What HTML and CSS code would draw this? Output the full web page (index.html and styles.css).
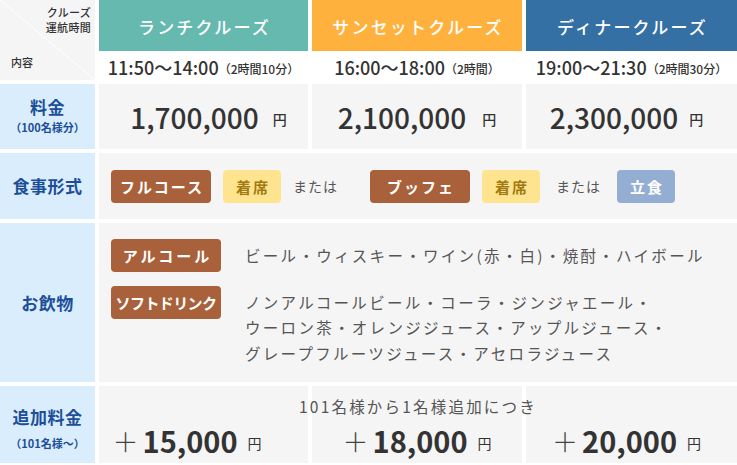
FILE: index.html
```html
<!DOCTYPE html>
<html lang="ja">
<head>
<meta charset="utf-8">
<title>クルーズ料金表</title>
<link rel="stylesheet" href="styles.css">
</head>
<body>
<div class="table">
  <div class="corner">
    <div class="corner-top">クルーズ<br>運航時間</div>
    <div class="corner-bottom">内容</div>
  </div>
  <div class="head">
    <div class="head-title teal">ランチクルーズ</div>
    <div class="head-time">11:50〜14:00<small>（2時間10分）</small></div>
  </div>
  <div class="head">
    <div class="head-title orange">サンセットクルーズ</div>
    <div class="head-time">16:00〜18:00<small>（2時間）</small></div>
  </div>
  <div class="head">
    <div class="head-title blue">ディナークルーズ</div>
    <div class="head-time">19:00〜21:30<small>（2時間30分）</small></div>
  </div>

  <div class="label">
    <span class="label-main">料金</span>
    <span class="label-sub">（100名様分）</span>
  </div>
  <div class="cell price price-first">1,700,000<span class="yen">円</span></div>
  <div class="cell price">2,100,000<span class="yen yen-wide">円</span></div>
  <div class="cell price price-last">2,300,000<span class="yen yen-tight">円</span></div>

  <div class="label"><span class="label-main">食事形式</span></div>
  <div class="cell wide meals">
    <div class="group">
      <span class="tag tag-brown">フルコース</span>
      <span class="tag tag-yellow">着席</span>
      <span class="or">または</span>
    </div>
    <div class="group group-loose">
      <span class="tag tag-brown">ブッフェ</span>
      <span class="tag tag-yellow">着席</span>
      <span class="or">または</span>
      <span class="tag tag-blue">立食</span>
    </div>
  </div>

  <div class="label"><span class="label-main">お飲物</span></div>
  <div class="cell wide drinks">
    <span class="tag tag-brown tag-drink">アルコール</span>
    <p class="drink-text drink-first">ビール・ウィスキー・ワイン(赤・白)・焼酎・ハイボール</p>
    <span class="tag tag-brown tag-drink tag-tight">ソフトドリンク</span>
    <p class="drink-text drink-multi">ノンアルコールビール・コーラ・ジンジャエール・<br>ウーロン茶・オレンジジュース・アップルジュース・<br>グレープフルーツジュース・アセロラジュース</p>
  </div>

  <div class="label label-extra">
    <span class="label-main">追加料金</span>
    <span class="label-sub label-sub-gap">（101名様〜）</span>
  </div>
  <div class="extra">
    <p class="extra-caption">101名様から1名様追加につき</p>
    <div class="extra-cell extra-first"><span class="plus">＋</span><span class="amount">15,000</span><span class="yen-small">円</span></div>
    <div class="extra-cell"><span class="plus">＋</span><span class="amount">18,000</span><span class="yen-small">円</span></div>
    <div class="extra-cell extra-last"><span class="plus">＋</span><span class="amount">20,000</span><span class="yen-small">円</span></div>
  </div>
</div>
</body>
</html>
```

FILE: styles.css
```css
* {
  box-sizing: border-box;
}

html, body {
  margin: 0;
  padding: 0;
  background: #ffffff;
}

body {
  font-family: "Noto Sans CJK JP", "Noto Sans", sans-serif;
  color: #333333;
  overflow: hidden;
}

.table {
  display: grid;
  grid-template-columns: 95px 209px 210px 1fr;
  grid-template-rows: 80px 65px 66px 159px 77px;
  gap: 4px;
  width: 737px;
}

/* corner cell */
.corner {
  background: linear-gradient(to top right, #f5f5f5 calc(50% - 0.8px), #ffffff 50%, #f5f5f5 calc(50% + 0.8px));
  display: flex;
  flex-direction: column;
  justify-content: space-between;
  padding: 5px 4px 10px 11px;
  font-size: 11px;
  font-weight: 500;
  line-height: 15px;
  color: #333333;
}

.corner-top {
  text-align: right;
  letter-spacing: 0.3px;
}

.corner-bottom {
  text-align: left;
}

/* column heads */
.head {
  display: flex;
  flex-direction: column;
}

.head-title {
  height: 57px;
  display: flex;
  align-items: center;
  justify-content: center;
  color: #ffffff;
  font-size: 17px;
  font-weight: 500;
  letter-spacing: 2.2px;
  padding-left: 2px;
  padding-top: 1px;
}

.teal { background: #66b9ae; }
.orange { background: #ffb13e; }
.blue { background: #3470a4; }

.head-time {
  flex: 1;
  display: flex;
  align-items: center;
  justify-content: center;
  font-size: 18px;
  font-weight: 500;
  padding-top: 3px;
  color: #333333;
}

.head-time small {
  font-size: 12px;
  font-weight: 500;
  margin-top: 3px;
}

/* row labels */
.label {
  background: #d9edfc;
  color: #1d4f99;
  font-weight: 700;
  display: flex;
  flex-direction: column;
  align-items: center;
  justify-content: center;
}

.label-main {
  font-size: 17px;
  line-height: 20px;
  letter-spacing: 0.5px;
}

.label-sub {
  font-size: 11px;
  line-height: 20px;
}

.label-extra {
  padding-top: 10px;
}

.label-sub-gap {
  margin-top: 6px;
}

/* value cells */
.cell {
  background: #f5f5f5;
}

.price {
  display: flex;
  align-items: center;
  justify-content: center;
  font-size: 28px;
  font-weight: 500;
  color: #333333;
  padding-top: 1px;
}

.price-first {
  padding-left: 10px;
}

.price-last {
  padding-right: 10px;
}

.yen {
  font-size: 14px;
  margin-left: 14px;
  margin-top: 4px;
}

.yen-wide {
  margin-left: 16px;
}

.yen-tight {
  margin-left: 11px;
}

.wide {
  grid-column: span 3;
}

/* meals */
.meals {
  display: flex;
  align-items: center;
  gap: 32px;
  padding-left: 12px;
}

.group {
  display: flex;
  align-items: center;
  gap: 12px;
}

.group-loose .or {
  margin: 0 4px;
}

.tag {
  height: 33px;
  border-radius: 4px;
  display: flex;
  align-items: center;
  justify-content: center;
  font-size: 15px;
  font-weight: 700;
  letter-spacing: 2px;
  padding-left: 2px;
}

.tag-brown {
  background: #a8613a;
  color: #ffffff;
  width: 100px;
}

.tag-yellow {
  background: #ffe490;
  color: #a27a10;
  width: 58px;
}

.tag-blue {
  background: #94aed3;
  color: #ffffff;
  width: 58px;
}

.or {
  font-size: 14px;
  color: #555555;
  letter-spacing: 1px;
}

/* drinks */
.drinks {
  display: grid;
  grid-template-columns: 110px 1fr;
  column-gap: 24px;
  row-gap: 14px;
  align-content: center;
  padding-left: 12px;
}

.tag-drink {
  width: 110px;
  letter-spacing: 3px;
  padding-left: 3px;
}

.tag-tight {
  letter-spacing: -0.6px;
  padding-left: 0;
}

.drink-text {
  margin: 0;
  font-size: 15.5px;
  letter-spacing: 2.3px;
  line-height: 25.5px;
  color: #555555;
}

.drink-first {
  align-self: center;
}

.drink-multi {
  padding-top: 4px;
}

/* extra charge row */
.extra {
  grid-column: span 3;
  display: grid;
  grid-template-columns: 209px 210px 1fr;
  gap: 4px;
  position: relative;
}

.extra-caption {
  position: absolute;
  top: 9px;
  left: 0;
  right: 0;
  margin: 0;
  text-align: center;
  font-size: 15.5px;
  line-height: 22px;
  letter-spacing: 2.2px;
  color: #555555;
}

.extra-cell {
  background: #f5f5f5;
  display: flex;
  align-items: center;
  justify-content: center;
  padding-top: 31px;
}

.extra-first {
  padding-right: 33px;
}

.extra-last {
  padding-right: 10px;
}

.plus {
  font-size: 26px;
  font-weight: 300;
  color: #444444;
  margin-right: 4px;
}

.amount {
  font-size: 29px;
  font-weight: 700;
  color: #333333;
}

.yen-small {
  font-size: 14px;
  margin-left: 10px;
  margin-top: 5px;
}
```
